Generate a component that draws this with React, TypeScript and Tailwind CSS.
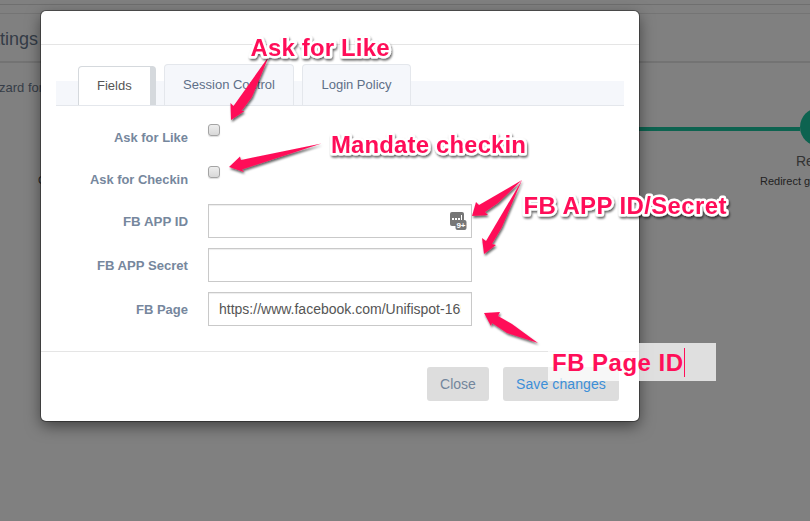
import React from "react";

const field =
  "block h-[34px] w-[264px] shrink-0 border border-[#c9c9c9] bg-white px-[10px] text-[14px] leading-5 text-[#555] shadow-[inset_0_1px_1px_rgba(0,0,0,0.075)] outline-none";

function Label({ children, width }: { children: string; width: number }) {
  return (
    <div className="flex w-[132px] shrink-0 justify-end">
      <svg width={width} height="18" className="block overflow-visible">
        <text x="0" y="14" textLength={width} lengthAdjust="spacingAndGlyphs" className="fill-[#76879d] text-[13px] font-bold">
          {children}
        </text>
      </svg>
    </div>
  );
}

function Checkbox() {
  return (
    <div className="w-[264px] shrink-0">
      <div className="h-3 w-3 rounded-[3px] border border-[#a4a4a4] bg-linear-to-b from-[#eee] to-[#d8d8d8] shadow-[0_1px_1px_#ddd]" />
    </div>
  );
}

function Note({ x, y, width, children, outlined = true }: { x: number; y: number; width: number; children: string; outlined?: boolean }) {
  return (
    <text
      x={x}
      y={y}
      textLength={width}
      fill="#ff0f59"
      stroke={outlined ? "#fff" : "none"}
      strokeWidth={5}
      strokeLinejoin="round"
      paintOrder="stroke"
      filter={outlined ? "url(#shade)" : undefined}
      className="text-[24px] font-bold"
    >
      {children}
    </text>
  );
}

function Page() {
  return (
    <div className="flex h-full flex-col">
      <div className="h-[5px] border-b border-[#6f6f6f]" />
      <div className="h-[9px] border-b border-[#747474]" />
      <div className="flex h-[49px] items-center border-b-2 border-[#737373] pt-[3px]">
        <span className="-ml-[5px] text-[18px] text-[#343c47]">ttings</span>
      </div>
      <div className="flex h-[45px] items-center pt-[5px]">
        <span className="-ml-px text-[13px] text-[#363d47]">zard for</span>
      </div>
      <div className="flex h-[90px] justify-between">
        <span className="mt-[64px] ml-[38px] text-[11px] text-[#222]">C</span>
        <div className="flex w-[174px] flex-col">
          <div className="flex h-[38px] items-center">
            <div className="mt-[4px] h-1 w-[164px] shrink-0 bg-[#0d6350]" />
            <div className="h-[38px] w-[38px] shrink-0 rounded-full bg-[#0d6350]" />
          </div>
          <div className="mt-[5px] ml-[160px] text-[14px] leading-5 whitespace-nowrap text-[#333]">Redirect</div>
          <div className="mt-[2px] ml-[124px] text-[11px] leading-4 whitespace-nowrap text-[#222]">Redirect guest</div>
        </div>
      </div>
    </div>
  );
}

export default function App() {
  return (
    <div className="relative h-[521px] w-[810px] overflow-hidden bg-[#808080] font-['Liberation_Sans',Arial,sans-serif]">
      <Page />
      <div className="absolute top-[11px] left-[41px] flex h-[410px] w-[598px] flex-col rounded-[5px] bg-white shadow-[0_0_0_1px_rgba(0,0,0,0.35),0_5px_15px_rgba(0,0,0,0.5)]">
        <div className="h-[34px] shrink-0 border-b border-[#e5e5e5]" />
        <div className="flex h-[306px] shrink-0 flex-col px-[15px] pt-[19px]">
          <div className="flex h-[42px] items-end gap-2 border-b border-[#e4e7ec] bg-[linear-gradient(#fff_0_17px,#f5f7fb_17px)] pl-[22px]">
            <div className="flex h-[39px] w-[78px] items-center rounded-t-[4px] border border-r-[6px] border-b-0 border-[#d5d9dd] bg-white pl-[18px] text-[13px] text-[#555]">
              <span>Fields</span>
            </div>
            <div className="flex h-[41px] w-[130px] items-center justify-center rounded-t-[4px] border border-b-0 border-[#e4e7ec] bg-[#f5f7fb] text-[13px] text-[#5e6f88]">Session Control</div>
            <div className="flex h-[41px] w-[109px] items-center justify-center rounded-t-[4px] border border-b-0 border-[#e4e7ec] bg-[#f5f7fb] text-[13px] text-[#5e6f88]">Login Policy</div>
          </div>
          <div className="flex flex-col">
            <div className="flex h-[42px] gap-5 pt-[18px]">
              <div className="mt-1"><Label width={74}>Ask for Like</Label></div>
              <Checkbox />
            </div>
            <div className="flex h-[42px] gap-5 pt-[18px]">
              <div className="mt-1"><Label width={98}>Ask for Checkin</Label></div>
              <Checkbox />
            </div>
            <div className="mt-[14px] flex flex-col gap-[10px]">
              <div className="flex items-center gap-5">
                <Label width={65}>FB APP ID</Label>
                <div className="relative">
                  <input className={field} />
                  <svg className="absolute top-[7px] right-[5px]" width="18" height="20">
                    <rect x="1" y="1" width="14" height="14" rx="2" fill="#777" />
                    <path d="M3 7h2v2H3zm3 0h2v2H6zm3 0h2v2H9zM12 4h1v5h-1z" fill="#fff" />
                    <rect x="6.5" y="9" width="11" height="10" rx="2" fill="#777" />
                    <text x="7.500" y="17" fill="#fff" fontSize="8" fontWeight="bold" textLength="9">9+</text>
                  </svg>
                </div>
              </div>
              <div className="flex items-center gap-5">
                <Label width={91}>FB APP Secret</Label>
                <input className={field} />
              </div>
              <div className="flex items-center gap-5">
                <Label width={52}>FB Page</Label>
                <input className={field} defaultValue="https://www.facebook.com/Unifispot-1652" />
              </div>
            </div>
          </div>
        </div>
        <div className="flex flex-1 justify-end gap-[14px] border-t border-[#e5e5e5] pt-[15px] pr-5">
          <button className="h-[34px] w-[62px] rounded-[3px] bg-[#ddd] text-[14px] text-[#73869c]">Close</button>
          <button className="h-[34px] w-[116px] rounded-[3px] bg-[#ddd] text-[14px] tracking-[0.1px] text-[#3c8fd8]">Save changes</button>
        </div>
      </div>
      <div className="absolute top-[343px] left-[548px] h-[38px] w-[168px] bg-white/75" />
      <svg className="absolute inset-0" width="810" height="521">
        <defs>
          <filter id="shade" x="-10%" y="-30%" width="120%" height="170%">
            <feDropShadow dx="1" dy="2" stdDeviation="1.3" floodColor="#000" floodOpacity="0.6" />
          </filter>
        </defs>
        <g fill="#ff0f59" filter="url(#shade)">
          <path d="M269 56L252 97L241.500 111L244.500 111L231 120L230.500 103L233.500 106Z" />
          <path d="M321.500 143.500L242 169.500L244 172L229 167L240 156.500L241 160Z" />
          <path d="M522 180L498 203L485 212L488 215L472 216L476 202L479 205Z" />
          <path d="M522 180L502 227L492 244L496 245L484 254L482 238L486 241Z" />
          <path d="M538 343L507 333L492 323L491 326L484 313L500 312L498 316L512 324Z" />
        </g>
        <Note x={250.5} y={56} width={139}>Ask for Like</Note>
        <Note x={331} y={153} width={195}>Mandate checkin</Note>
        <Note x={523.5} y={214} width={203}>FB APP ID/Secret</Note>
        <Note x={552} y={371} width={131} outlined={false}>FB Page ID</Note>
        <path d="M684.500 348v29" stroke="#ff0f59" />
      </svg>
    </div>
  );
}
